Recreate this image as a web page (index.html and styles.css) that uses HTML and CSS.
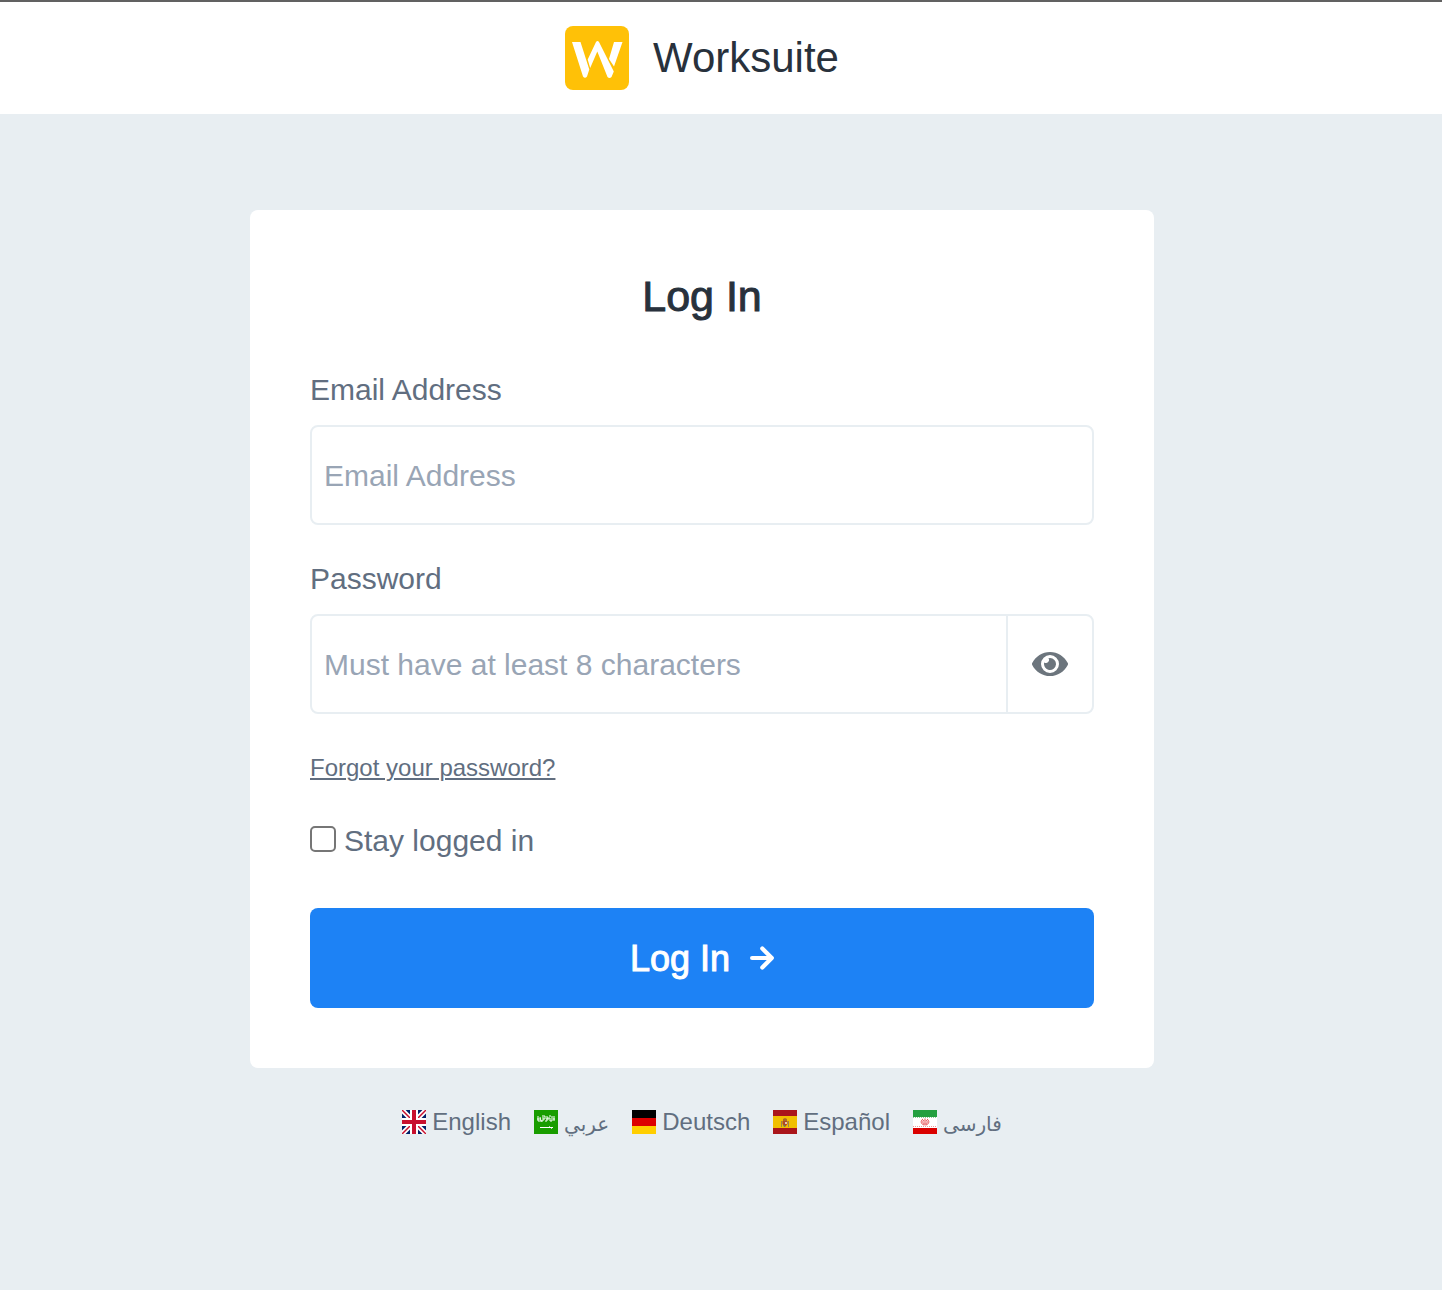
FILE: index.html
```html
<!DOCTYPE html>
<html lang="en">
<head>
<meta charset="utf-8">
<meta name="viewport" content="width=device-width, initial-scale=1">
<title>Worksuite</title>
<link rel="stylesheet" href="styles.css">
</head>
<body>
<header class="header">
  <svg class="logo" viewBox="0 0 64 64" aria-hidden="true">
    <rect width="64" height="64" rx="8" fill="#ffc107"/>
    <path d="M7 16h8.500L24.300 43.500 22 50.500q-2 2.500-4 0zM31 16q1.500-2 3 0L48.800 45.500l-2.300 5.500q-2 2-4 0L32.300 25.500 25.200 42l-2.500-8.500zM49 16h8.500L49 40.500l-5-7.500z" fill="#fff"/>
  </svg>
  <span class="brand">Worksuite</span>
</header>
<main class="main">
  <form class="card">
    <h1 class="title">Log In</h1>
    <div class="group">
      <label class="label" for="email">Email Address</label>
      <div class="field"><input class="input" id="email" type="email" placeholder="Email Address"></div>
    </div>
    <div class="group">
      <label class="label" for="password">Password</label>
      <div class="field">
        <input class="input" id="password" type="password" placeholder="Must have at least 8 characters">
        <button class="reveal" type="button" aria-label="Show password">
          <svg class="eye" viewBox="0 0 576 512" aria-hidden="true"><path fill="currentColor" d="M572.520 241.400C518.290 135.590 410.930 64 288 64S57.680 135.640 3.480 241.410a32.350 32.350 0 0 0 0 29.190C57.710 376.410 165.070 448 288 448s230.320-71.640 284.520-177.410a32.350 32.350 0 0 0 0-29.190zM288 400a144 144 0 1 1 144-144 143.930 143.930 0 0 1-144 144zm0-240a95.310 95.310 0 0 0-25.310 3.790 47.850 47.850 0 0 1-66.900 66.900A95.780 95.780 0 1 0 288 160z"/></svg>
        </button>
      </div>
    </div>
    <a class="forgot" href="#forgot">Forgot your password?</a>
    <label class="stay"><input class="check" type="checkbox">Stay logged in</label>
    <button class="submit" type="submit">
      <span>Log In</span>
      <svg class="arrow" viewBox="0 0 24 24" fill="none" stroke="currentColor" stroke-width="4.200" stroke-linecap="round" stroke-linejoin="round" aria-hidden="true"><path d="M2.100 12h19M12.300 2.500l9.500 9.500-9.500 9.500"/></svg>
    </button>
  </form>
  <nav class="languages" aria-label="Language">
    <a class="language" href="#en">
      <svg class="flag" viewBox="0 0 24 24" aria-hidden="true"><path fill="#012169" d="M0 0h24v24H0z"/><path d="M0 0l24 24M24 0L0 24" stroke="#fff" stroke-width="5"/><path d="M0 0l24 24M24 0L0 24" stroke="#c8102e" stroke-width="1.500"/><path d="M12 0v24M0 12h24" stroke="#fff" stroke-width="8"/><path d="M12 0v24M0 12h24" stroke="#c8102e" stroke-width="4"/></svg>
      <span>English</span>
    </a>
    <a class="language" href="#ar">
      <svg class="flag" viewBox="0 0 24 24" fill="none" aria-hidden="true"><path fill="#199d00" d="M0 0h24v24H0z"/><path d="M4 6v5M6 7l1 4h2V7M3 9h3M8 6h3v3H9M11 11h2V6M13 8h3v3M15 6h2M18 6v5h-2M20 6v5M4 11h4M12 9h3M19 9h2" stroke="#fff" stroke-width="1"/><path d="M6 17.500h13M15 16.500l3 2" stroke="#fff" stroke-width="1"/></svg>
      <span class="arabic" lang="ar">عربي</span>
    </a>
    <a class="language" href="#de">
      <svg class="flag" viewBox="0 0 24 24" aria-hidden="true"><path d="M0 0h24v8H0z"/><path fill="#d00" d="M0 8h24v8H0z"/><path fill="#ffce00" d="M0 16h24v8H0z"/></svg>
      <span>Deutsch</span>
    </a>
    <a class="language" href="#es">
      <svg class="flag" viewBox="0 0 24 24" aria-hidden="true"><path fill="#aa151b" d="M0 0h24v24H0z"/><path fill="#f1bf00" d="M0 6h24v12H0z"/><path fill="#ad6a28" d="M10 9l2-1 2 1v2h-4z"/><path fill="#ad4a2a" d="M9.500 11h5v3l-2.500 3-2.500-3z"/><path d="M8.500 11v6M15.500 11v6" stroke="#9a8350"/><path fill="#e3c6ad" d="M12 12h2v2h-2z"/><path fill="#6a8a50" d="M10 15h2v2h-1z"/></svg>
      <span>Español</span>
    </a>
    <a class="language" href="#fa">
      <svg class="flag" viewBox="0 0 24 24" fill="none" aria-hidden="true"><path fill="#fff" d="M0 0h24v24H0z"/><path fill="#239f40" d="M0 0h24v7H0z"/><path fill="#da0000" d="M0 18h24v6H0z"/><path d="M0 7.500h24" stroke="#8fc99b" stroke-dasharray="1 1"/><path d="M0 16.500h24" stroke="#ef9a9a" stroke-dasharray="1 1"/><path d="M12 8.500v7M10 9c-3 2-2 5 1 6M14 9c3 2 2 5-1 6M10.500 10c-1 2-1 3 1 4M13.500 10c1 2 1 3-1 4" stroke="#e5484d" stroke-width="1"/></svg>
      <span class="arabic" lang="fa">فارسی</span>
    </a>
  </nav>
</main>
</body>
</html>
```

FILE: styles.css
```css
* { box-sizing: border-box; }

body {
  margin: 0;
  min-height: 100vh;
  background: #e8eef2;
  color: #616e80;
  font-family: "Liberation Sans", Arial, sans-serif;
  font-size: 30px;
  line-height: 45px;
}

button, input { font: inherit; color: inherit; }

.header {
  display: flex;
  align-items: center;
  justify-content: center;
  gap: 24px;
  padding: 24px 38px 24px 0;
  border-top: 2px solid #616161;
  background: #fff;
}

.logo { width: 64px; height: 64px; }

.brand {
  color: #28313c;
  font-size: 42px;
  line-height: 64px;
}

.main {
  display: flex;
  flex-direction: column;
  align-items: center;
  gap: 36px;
  padding: 96px 38px 96px 0;
}

.card {
  display: flex;
  flex-direction: column;
  width: 100%;
  max-width: 904px;
  padding: 60px;
  border-radius: 8px;
  background: #fff;
}

.title {
  margin: 0 0 46px;
  color: #28313c;
  font-size: 43px;
  font-weight: 400;
  line-height: 52px;
  text-align: center;
  -webkit-text-stroke: 1px currentColor;
}

.group { margin-bottom: 32px; }

.label {
  display: block;
  margin-bottom: 14px;
  line-height: 43px;
}

.field {
  display: flex;
  height: 100px;
  border: 2px solid #e8eef2;
  border-radius: 8px;
}

.input {
  flex: 1;
  min-width: 0;
  padding: 0 12px;
  border: 0;
  border-radius: 8px;
  background: none;
}

.input::placeholder { color: #99a5b5; opacity: 1; }

.reveal {
  display: flex;
  align-items: center;
  justify-content: center;
  width: 86px;
  padding: 0;
  border: 0;
  border-left: 2px solid #e8eef2;
  background: none;
  color: #6c757d;
}

.eye { width: 36px; height: 32px; }

.forgot {
  align-self: flex-start;
  margin: 4px 0 32px;
  color: inherit;
  font-size: 24px;
  line-height: 36px;
  text-underline-offset: 2px;
  text-decoration-thickness: 2px;
}

.stay {
  display: flex;
  align-items: center;
  align-self: flex-start;
  gap: 8px;
  margin-bottom: 45px;
}

.check {
  width: 26px;
  height: 26px;
  margin: 0 0 4px;
  border: 2px solid #767676;
  border-radius: 5px;
  background: #fff;
  appearance: none;
}

.check:checked { background: #1d82f5; }

.submit {
  display: flex;
  align-items: center;
  justify-content: center;
  gap: 20px;
  height: 100px;
  border: 0;
  border-radius: 8px;
  background: #1d82f5;
  color: #fff;
  font-size: 36px;
  -webkit-text-stroke: 1px currentColor;
}

.arrow { width: 24px; height: 24px; }

.languages {
  display: flex;
  flex-wrap: wrap;
  justify-content: center;
  gap: 23px;
  font-size: 24px;
  line-height: 36px;
}

.language {
  display: flex;
  align-items: center;
  gap: 6px;
  color: inherit;
  text-decoration: none;
}

.flag { width: 24px; height: 24px; }

.arabic {
  padding-top: 4px;
  font-family: "DejaVu Sans", sans-serif;
  font-size: 20px;
  line-height: 32px;
}
```
